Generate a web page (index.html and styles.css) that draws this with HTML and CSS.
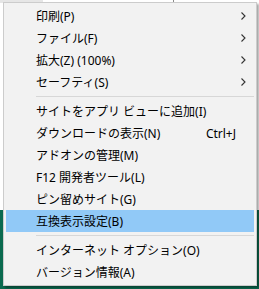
FILE: index.html
```html
<!DOCTYPE html>
<html>

<head>
    <title>ツール</title>
    <link rel="stylesheet" href="styles.css">
</head>

<body>
    <div class="browser">
        <div class="chrome">
            <div class="tabStrip">
                <div class="tabLeft"></div>
                <div class="tabMid"></div>
                <div class="tabRight"></div>
            </div>
        </div>
        <div class="site"></div>
    </div>

    <div class="menu">
        <div class="item">印刷(P)<span class="arrow"><svg width="5" height="8" viewBox="0 0 5 8"><polyline points="0.5,0.5 4,4 0.5,7.5" fill="none" stroke="#333" stroke-width="1.1"/></svg></span></div>
        <div class="item">ファイル(F)<span class="arrow"><svg width="5" height="8" viewBox="0 0 5 8"><polyline points="0.5,0.5 4,4 0.5,7.5" fill="none" stroke="#333" stroke-width="1.1"/></svg></span></div>
        <div class="item">拡大(Z) (100%)<span class="arrow"><svg width="5" height="8" viewBox="0 0 5 8"><polyline points="0.5,0.5 4,4 0.5,7.5" fill="none" stroke="#333" stroke-width="1.1"/></svg></span></div>
        <div class="item">セーフティ(S)<span class="arrow"><svg width="5" height="8" viewBox="0 0 5 8"><polyline points="0.5,0.5 4,4 0.5,7.5" fill="none" stroke="#333" stroke-width="1.1"/></svg></span></div>
        <div class="separator"></div>
        <div class="item">サイトをアプリ ビューに追加(I)</div>
        <div class="item">ダウンロードの表示(N)<span class="shortcut">Ctrl+J</span></div>
        <div class="item">アドオンの管理(M)</div>
        <div class="item">F12 開発者ツール(L)</div>
        <div class="item">ピン留めサイト(G)</div>
        <div class="item selected">互換表示設定(B)</div>
        <div class="separator"></div>
        <div class="item">インターネット オプション(O)</div>
        <div class="item">バージョン情報(A)</div>
    </div>
</body>

</html>
```

FILE: styles.css
```css
/* ページ全体 */
body {
    margin: 0;
    width: 259px;
    height: 289px;
    overflow: hidden;
    background-color: #ffffff;
    font-family: "Noto Sans", "Noto Sans CJK JP", sans-serif;
    font-size: 12px;
    color: #000000;
}

.browser {
    height: 289px;
    display: flex;
    flex-direction: column;
}

.chrome {
    height: 210px;
    background-color: #ffffff;
}

.tabStrip {
    height: 3px;
    display: flex;
}

.tabLeft {
    width: 43px;
    background-color: #e6e6e6;
}

.tabMid {
    width: 130px;
    border-right: 1px solid #8a8a8a;
}

.tabRight {
    flex: 1;
}

.site {
    flex: 1;
    background-color: #0b6a4f;
}

/* 右クリックメニュー（上に重なる） */
.menu {
    position: absolute;
    left: 3px;
    top: 2px;
    width: 248px;
    padding: 2px;
    background-color: #f2f2f2;
    border: 1px solid #cccccc;
    box-shadow: 2px 2px 2px rgba(0, 0, 0, 0.35);
}

.item {
    height: 22px;
    display: flex;
    align-items: center;
    padding: 0 8px 0 30px;
    white-space: nowrap;
}

.selected {
    background-color: #91c9f7;
}

.arrow {
    margin-left: auto;
    display: flex;
    align-items: center;
}

.shortcut {
    margin-left: auto;
    padding-right: 10px;
}

.separator {
    height: 1px;
    margin: 3px 0 3px 30px;
    background-color: #d7d7d7;
}
```
